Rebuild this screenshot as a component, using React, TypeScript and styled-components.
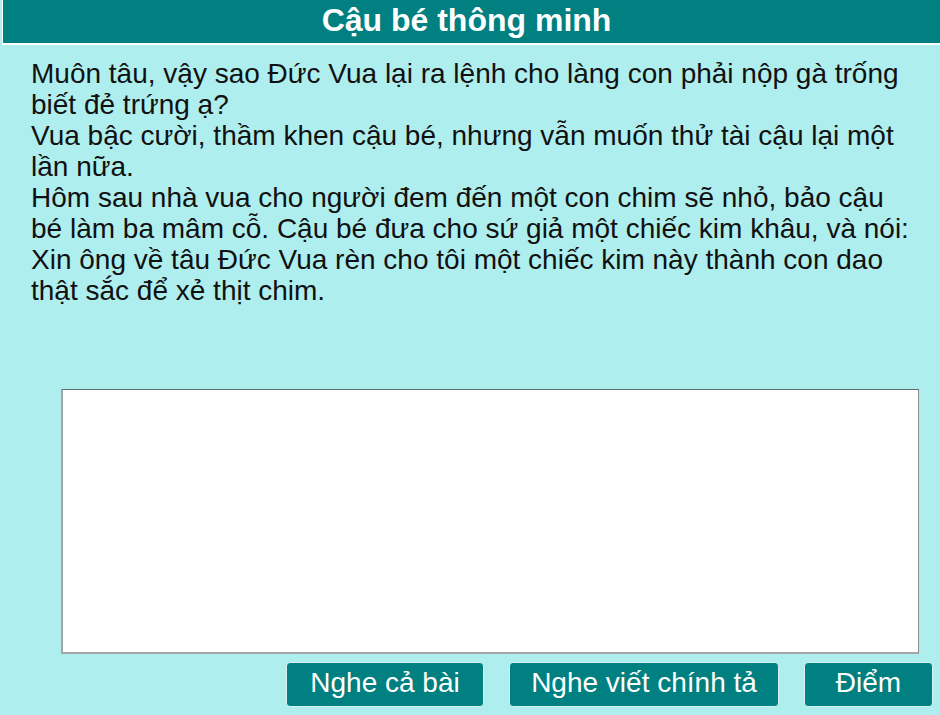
import React from 'react';
import styled, { createGlobalStyle } from 'styled-components';

const GlobalStyle = createGlobalStyle`
	html,
	body {
		margin: 0;
		padding: 0;
		background: #afeeee;
	}

	body {
		font-family: 'Liberation Sans', Arial, sans-serif;
	}
`;

const lines = [
	'Muôn tâu, vậy sao Đức Vua lại ra lệnh cho làng con phải nộp gà trống biết đẻ trứng ạ?',
	'Vua bậc cười, thầm khen cậu bé, nhưng vẫn muốn thử tài cậu lại một lần nữa.',
	'Hôm sau nhà vua cho người đem đến một con chim sẽ nhỏ, bảo cậu bé làm ba mâm cỗ. Cậu bé đưa cho sứ giả một chiếc kim khâu, và nói:',
	'Xin ông về tâu Đức Vua rèn cho tôi một chiếc kim này thành con dao thật sắc để xẻ thịt chim.',
];

const actions = [
	{ label: 'Nghe cả bài', width: 198 },
	{ label: 'Nghe viết chính tả', width: 270 },
	{ label: 'Điểm', width: 129 },
];

const App = () => {
	return (
		<>
			<GlobalStyle />
			<Page>
				<Header>
					<Title>Cậu bé thông minh</Title>
				</Header>
				<Story>
					{lines.map((line) => (
						<Paragraph key={line}>{line}</Paragraph>
					))}
				</Story>
				<Answer spellCheck={false} />
				<Toolbar>
					{actions.map((action) => (
						<ActionButton key={action.label} $width={action.width}>
							{action.label}
						</ActionButton>
					))}
				</Toolbar>
			</Page>
		</>
	);
};

export default App;

const Page = styled.div`
	display: flex;
	flex-direction: column;
	width: 940px;
	height: 715px;
	overflow: hidden;
	background: #afeeee;
`;

const Header = styled.header`
	display: flex;
	align-items: center;
	justify-content: center;
	height: 43px;
	margin-left: 2px;
	padding-right: 10px;
	background: #008080;
	border-left: 1px solid #ffffff;
	border-bottom: 2px solid #ffffff;
`;

const Title = styled.h1`
	margin: 0 0 2px;
	font-size: 32px;
	font-weight: bold;
	color: #ffffff;
`;

const Story = styled.div`
	width: 884px;
	margin: 13px 0 0 31px;
	font-size: 28px;
	line-height: 31px;
	color: #111111;
`;

const Paragraph = styled.p`
	margin: 0;
`;

const Answer = styled.textarea`
	box-sizing: border-box;
	width: 858px;
	height: 265px;
	margin: 83px 0 0 61px;
	padding: 4px;
	resize: none;
	background: #ffffff;
	border-style: solid;
	border-width: 1px 1px 2px 2px;
	border-color: #5f7070 #8c8c8c #a6a6a6 #a6a6a6;
	font-family: 'Liberation Sans', Arial, sans-serif;
	font-size: 20px;
	outline: none;
`;

const Toolbar = styled.div`
	display: flex;
	justify-content: flex-end;
	gap: 25px;
	margin: 8px 7px 0 0;
`;

const ActionButton = styled.button<{ $width: number }>`
	box-sizing: border-box;
	width: ${(props) => props.$width}px;
	height: 45px;
	padding: 0 0 3px;
	background: #008080;
	border: 1px solid #d6f2f2;
	border-radius: 4px;
	color: #ffffff;
	font-family: 'Liberation Sans', Arial, sans-serif;
	font-size: 28px;
	cursor: pointer;
`;
